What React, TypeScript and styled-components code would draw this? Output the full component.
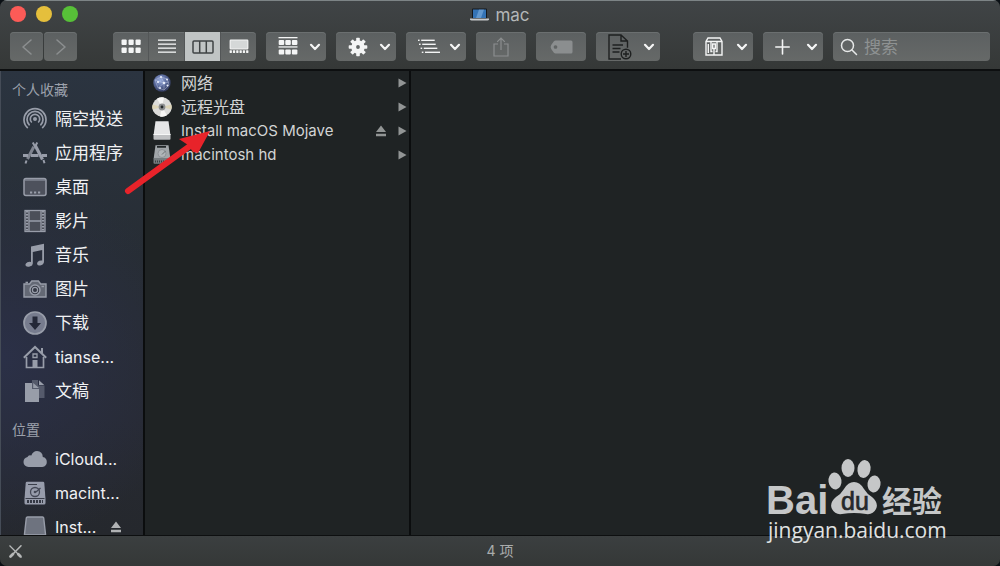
import React from "react";
import styled, { createGlobalStyle, css } from "styled-components";

const GlobalStyle = createGlobalStyle`
  * { box-sizing: border-box; }
  html, body, #root { height: 100%; }
  body {
    margin: 0;
    background: #0a0f14;
    font-family: Inter, "Noto Sans CJK SC", sans-serif;
    color: #dcdddd;
  }
  button, input { font: inherit; color: inherit; }
  svg { display: block; flex: none; }
`;

const Window = styled.main`
  position: relative;
  display: flex;
  flex-direction: column;
  height: 100vh;
  border-radius: 7px;
  overflow: hidden;
  background: #1f2324;
`;

const Header = styled.header`
  flex: none;
  padding: 0 10px 8px;
  border-top: 1px solid #7d8486;
  border-bottom: 2px solid #0d0f10;
  background: linear-gradient(#404446, #353837);
`;

const TitleBar = styled.div`
  position: relative;
  display: flex;
  align-items: center;
  justify-content: center;
  height: 31px;
  padding-bottom: 4px;
`;

const TrafficLights = styled.div`
  position: absolute;
  left: 0;
  top: 5px;
  display: flex;
  gap: 10px;
`;

const Light = styled.button<{ $color: string }>`
  width: 16px;
  height: 16px;
  padding: 0;
  border: 0;
  border-radius: 50%;
  background: ${(p) => p.$color};
`;

const Title = styled.h1`
  display: flex;
  align-items: center;
  gap: 6px;
  margin: 0;
  font-size: 17px;
  font-weight: 400;
  line-height: 24px;
  color: #b4b7b8;
`;

const Toolbar = styled.div`
  display: flex;
  gap: 10px;
`;

const buttonFace = css`
  height: 29px;
  border: 0;
  border-radius: 4px;
  background: linear-gradient(#5c6061, #666968);
  box-shadow: inset 0 1px 0 #6b6f70;
`;

const NavGroup = styled.div`
  display: flex;
  gap: 1px;
  margin-right: 26px;
`;

const ToolButton = styled.button<{ $width: number; $split?: boolean; $dim?: boolean }>`
  ${buttonFace}
  display: flex;
  flex: none;
  align-items: center;
  justify-content: ${(p) => (p.$split ? "space-between" : "center")};
  width: ${(p) => p.$width}px;
  padding: ${(p) => (p.$split ? "0 5px 0 12px" : "0")};
  color: ${(p) => (p.$dim ? "#8b8e8f" : "#f4f5f5")};
`;

const ViewGroup = styled.div`
  ${buttonFace}
  display: flex;
  flex: none;
  width: 143px;
  overflow: hidden;
`;

const ViewButton = styled.button<{ $active?: boolean }>`
  display: flex;
  flex: 1;
  align-items: center;
  justify-content: center;
  padding: 0;
  border: 0;
  background: ${(p) => (p.$active ? "#c0c4c4" : "transparent")};
  color: ${(p) => (p.$active ? "#3f4344" : "#f4f5f5")};
  & + & { border-left: 1px solid #535657; }
`;

const TrailingTools = styled.div`
  display: flex;
  flex: 1;
  gap: 10px;
  min-width: 0;
  margin-left: 23px;
`;

const SearchField = styled.label`
  ${buttonFace}
  display: flex;
  flex: 1;
  align-items: center;
  gap: 6px;
  min-width: 0;
  padding: 0 7px;
  color: #e6e8e8;
`;

const SearchInput = styled.input`
  flex: 1;
  min-width: 0;
  padding: 0;
  border: 0;
  outline: 0;
  background: transparent;
  font-size: 17px;
  line-height: 24px;
  &::placeholder { color: #8e9292; opacity: 1; }
`;

const Content = styled.div`
  display: flex;
  flex: 1;
  min-height: 0;
`;

const Sidebar = styled.nav`
  flex: none;
  width: 143px;
  overflow: hidden;
  padding-top: 7px;
  border-left: 1px solid #454c57;
  background:
    radial-gradient(ellipse 190px 190px at 0 62%, #2b3047, transparent),
    linear-gradient(#2b3440, #272d34 40%, #272a33 75%, #25282d);
`;

const SidebarHeading = styled.h2`
  margin: 0;
  padding-left: 11px;
  font-size: 14px;
  font-weight: 400;
  line-height: 24px;
  color: #9ca1ac;
`;

const SidebarList = styled.ul`
  margin: 0 0 10px;
  padding: 0;
  list-style: none;
`;

const SidebarItem = styled.li`
  display: flex;
  align-items: center;
  height: 34px;
  padding-left: 22px;
`;

const SidebarLink = styled.a<{ $latin?: boolean }>`
  display: flex;
  align-items: center;
  gap: 8px;
  font-size: ${(p) => (p.$latin ? 16 : 17)}px;
  line-height: 24px;
  white-space: nowrap;
  color: #f0f1f3;
  text-decoration: none;
  svg { color: #989da9; }
`;

const EjectButton = styled.button`
  display: flex;
  align-items: center;
  padding: 0;
  border: 0;
  margin-left: 14px;
  background: transparent;
  color: #b0b2b4;
`;

const Column = styled.ul`
  flex: none;
  width: 268px;
  margin: 0;
  padding: 0 2px 0 7px;
  border-left: 2px solid #0b0d0e;
  border-right: 2px solid #0b0d0e;
  list-style: none;
`;

const FileRow = styled.li`
  display: flex;
  align-items: center;
  gap: 11px;
  height: 24px;
  color: #929595;
`;

const FileLink = styled.a<{ $latin?: boolean }>`
  display: flex;
  flex: 1;
  align-items: center;
  gap: 9px;
  font-size: ${(p) => (p.$latin ? 15 : 16)}px;
  line-height: 24px;
  white-space: nowrap;
  color: #d2d4d4;
  text-decoration: none;
`;

const RowEject = styled(EjectButton)`
  margin-left: 0;
  color: #929595;
`;

const Footer = styled.footer`
  display: flex;
  flex: none;
  align-items: center;
  height: 31px;
  padding: 0 8px;
  border-top: 1px solid #0d0f10;
  background: linear-gradient(#3b3f40, #353837);
`;

const FooterButton = styled.button`
  padding: 0;
  border: 0;
  background: transparent;
  color: #b6b8b8;
`;

const Count = styled.p`
  flex: 1;
  margin: 0 15px 0 0;
  font-size: 14px;
  line-height: 20px;
  text-align: center;
  color: #a9acac;
`;

const Pointer = styled.svg`
  position: absolute;
  left: 120px;
  top: 125px;
  pointer-events: none;
`;

const Watermark = styled.div`
  position: absolute;
  right: 54px;
  bottom: 22px;
  width: 178px;
  pointer-events: none;
`;

const BrandMark = styled.svg`
  overflow: visible;
  fill: #c5c7c8;
  font-family: "Liberation Sans", sans-serif;
`;

const BrandUrl = styled.div`
  font-family: "Open Sans", sans-serif;
  font-size: 21px;
  line-height: 28px;
  white-space: nowrap;
  color: #e0e2e2;
`;

const Chevron = () => (
  <svg width="12" height="10" viewBox="0 0 12 10" fill="none" stroke="currentColor" strokeWidth="2.2" strokeLinecap="round" strokeLinejoin="round">
    <path d="M2 2.8 6 7l4-4.2" />
  </svg>
);

const NavArrow = ({ forward = false }: { forward?: boolean }) => (
  <svg width="12" height="18" viewBox="0 0 12 18" fill="none" stroke="currentColor" strokeWidth="1.6" strokeLinecap="round" strokeLinejoin="round">
    <path d={forward ? "M2 2l8 7-8 7" : "M10 2 2 9l8 7"} />
  </svg>
);

const GridIcon = () => (
  <svg width="20" height="15" viewBox="0 0 20 15" fill="currentColor">
    {[0, 7, 14].map((x) => [0.5, 8.5].map((y) => <rect key={`${x}-${y}`} x={x + 0.5} y={y} width="5.2" height="5.6" rx="1" />))}
  </svg>
);

const ListIcon = () => (
  <svg width="20" height="15" viewBox="0 0 20 15" fill="currentColor">
    {[0.5, 4.5, 8.5, 12.5].map((y) => <rect key={y} x="1" y={y} width="18" height="1.3" />)}
  </svg>
);

const ColumnsIcon = () => (
  <svg width="22" height="14" viewBox="0 0 22 14" fill="none" stroke="currentColor" strokeWidth="1.5">
    <rect x="1" y="1" width="20" height="12" rx="1" />
    <path d="M7.7 1v12M14.3 1v12" />
  </svg>
);

const GalleryIcon = () => (
  <svg width="20" height="15" viewBox="0 0 20 15" fill="currentColor">
    <rect x="1.2" y="1.2" width="17.6" height="8.6" rx=".6" fill="#d5d8d8" stroke="currentColor" strokeWidth="1.2" />
    {[0.6, 3.9, 7.2, 10.5, 13.8, 17.1].map((x) => <rect key={x} x={x} y="11.3" width="2.3" height="2.6" rx=".4" />)}
  </svg>
);

const ArrangeIcon = () => (
  <svg width="20" height="19" viewBox="0 0 20 19" fill="currentColor">
    <rect x=".5" y="0" width="19" height="1.3" />
    <rect x=".5" y="9.3" width="19" height="1.3" />
    {[0.7, 7.3, 13.9].map((x) => [3, 12.6].map((y) => <rect key={`${x}-${y}`} x={x} y={y} width="5.5" height="5" rx="1" />))}
  </svg>
);

const GearIcon = () => (
  <svg width="20" height="20" viewBox="-10 -10 20 20" fill="currentColor">
    {[0, 45, 90, 135, 180, 225, 270, 315].map((a) => <rect key={a} x="-1.8" y="-9.3" width="3.6" height="5" rx=".7" transform={`rotate(${a})`} />)}
    <circle r="4.3" fill="none" stroke="currentColor" strokeWidth="4.8" />
  </svg>
);

const OutlineIcon = () => (
  <svg width="22" height="15" viewBox="0 0 22 15" fill="currentColor">
    {[[0, 0.6, 12.5], [1, 4.6, 12.5], [2.6, 8.6, 12.5], [3.8, 12.6, 14]].map(([x, y, w]) => (
      <g key={y}>
        <rect x={x} y={y} width="1.6" height="1.4" />
        <rect x={x + 3.2} y={y} width={w + 1} height="1.4" />
      </g>
    ))}
  </svg>
);

const ShareIcon = () => (
  <svg width="16" height="20" viewBox="0 0 16 20" fill="none" stroke="currentColor" strokeWidth="1.2">
    <path d="M5 7H1v12h14V7h-4M8 13V1M4.2 4.8 8 1l3.8 3.8" />
  </svg>
);

const TagIcon = () => (
  <svg width="23" height="14" viewBox="0 0 23 14">
    <path fill="currentColor" fillRule="evenodd" d="M5.6.5H21q1.5 0 1.5 1.5v10q0 1.5-1.5 1.5H5.6Q4.6 13.500 3.900 12.800L1.200 9Q0 7 1.200 5L3.900 1.200Q4.600.5 5.600.5ZM5.500 5.200a1.800 1.800 0 1 0 .01 0Z" />
  </svg>
);

const NewFileIcon = () => (
  <svg width="24" height="26" viewBox="0 0 24 26" fill="none" stroke="#1e2020" strokeWidth="1.4">
    <path d="M19.500 13.800V7L13 1H1v24h12M13 1v6h6.500M4.500 11h10.500M4.500 14.500h8M4.500 18h7" />
    <circle cx="18" cy="20" r="4.800" />
    <path d="M18 17v6M15 20h6" />
  </svg>
);

const ArchiveIcon = () => (
  <svg width="18" height="19" viewBox="0 0 18 19" fill="none" stroke="currentColor" strokeWidth="1.4">
    <path d="M3 1h12l2 3.500V18H1V4.500ZM1 4.500h16M6 4.500V14.500h1.500M12 4.500V14.500h-1.500M3.300 7v9" />
    <path d="M7.700 7h2.600v4.500H7.700ZM9 11.500V18" />
  </svg>
);

const PlusIcon = () => (
  <svg width="15" height="16" viewBox="0 0 15 16" stroke="currentColor" strokeWidth="1.600" strokeLinecap="round">
    <path d="M7.500 1v14M.8 8h13.400" />
  </svg>
);

const SearchIcon = () => (
  <svg width="18" height="18" viewBox="0 0 18 18" fill="none" stroke="currentColor" strokeWidth="1.500" strokeLinecap="round">
    <circle cx="7.500" cy="7.500" r="6" />
    <path d="m12 12 4.500 4.500" />
  </svg>
);

const LaptopIcon = () => (
  <svg width="19" height="14" viewBox="0 0 19 14">
    <rect x="2" y=".5" width="15" height="10.500" rx="1" fill="#14191d" />
    <path fill="#3473b5" d="M3 1.500h13v8.500H3z" />
    <path fill="#8fbde8" d="m9 1.500-3 8.500h5l3-8.500z" opacity=".5" />
    <path fill="#c5c8ca" d="M0 10.500h19v1.300q-.5.800-1.500.8h-16Q.5 12.600 0 11.800Z" />
  </svg>
);

const EjectIcon = () => (
  <svg width="12" height="12" viewBox="0 0 12 12" fill="currentColor">
    <path d="M6 .5 11 7H1ZM1 8.800h10v2.400H1z" />
  </svg>
);

const Disclosure = () => (
  <svg width="9" height="10" viewBox="0 0 9 10" fill="currentColor">
    <path d="M.5.500 8.500 5 .5 9.500Z" />
  </svg>
);

const SidebarIcon = ({ children }: { children: React.ReactNode }) => (
  <svg width="24" height="24" viewBox="0 0 24 24" fill="none" stroke="currentColor">{children}</svg>
);

const icons = {
  airdrop: (
    <SidebarIcon>
      <circle cx="12" cy="12" r="2" fill="currentColor" stroke="none" />
      <g strokeWidth="1.700">
        <path d="M8.800 15.500a4.700 4.700 0 1 1 6.400 0" />
        <path d="M6.600 18.300a8 8 0 1 1 10.800 0" />
        <path d="M4.800 21a11 11 0 1 1 14.400 0" />
      </g>
    </SidebarIcon>
  ),
  apps: (
    <SidebarIcon>
      <path strokeWidth="3.200" d="m12 4 7.500 14.500" />
      <path strokeWidth="3" stroke="#7f848f" d="M10.800 5.800 4.500 18" />
      <path strokeWidth="2" d="m9.800 1.500 2.200 4 2.300-4M3.500 19.500l-1 3M20.500 19l1 3.300" />
      <path strokeWidth="2.800" d="M0 14.500h5M8 14.500h7.500M19 14.500h5" />
    </SidebarIcon>
  ),
  desktop: (
    <SidebarIcon>
      <rect x="1" y="3.500" width="22" height="17" rx="2" strokeWidth="1.500" fill="#4d515c" />
      <path strokeWidth="1.200" d="M2 5h20" />
      <path strokeWidth="2.200" d="M7 17.500h2.200M11 17.500h2.200M15 17.500h2.200" />
    </SidebarIcon>
  ),
  movies: (
    <SidebarIcon>
      <rect x="2" y="1.500" width="20" height="21" fill="#4b4f59" strokeWidth="1.300" />
      <path strokeWidth="1.300" d="M6 1.500v21M18 1.500v21M6 12h12" />
      <path strokeWidth="2.200" strokeDasharray="1.500 1.500" d="M4 2v20M20 2v20" />
    </SidebarIcon>
  ),
  music: (
    <SidebarIcon>
      <path fill="currentColor" stroke="none" d="M8 3.500 21 .8v17.700q0 2.800-3 3.700t-3.800-1q-.6-2.200 2-3.400 1.400-.6 3-.3V7L9.800 9v11.500q0 2.300-3 3.100t-4.200-1q-.8-2 1.800-3.400Q6 18.500 8 18.900Z" />
    </SidebarIcon>
  ),
  photos: (
    <SidebarIcon>
      <path strokeWidth="1.400" fill="#646975" d="M1 7h5.500l2.300-3h6.600l2.300 3H23v13H1Z" />
      <path strokeWidth="1.600" d="M2.500 5.500h2.500" />
      <circle cx="12" cy="13" r="5" strokeWidth="1.500" fill="#343844" />
      <circle cx="12" cy="13" r="2.600" strokeWidth="1.200" />
      <path strokeWidth="1.400" d="M18.500 9.500h2.500" />
    </SidebarIcon>
  ),
  downloads: (
    <SidebarIcon>
      <circle cx="12" cy="12" r="11" fill="#777c8e" strokeWidth="1.700" />
      <path fill="#242838" stroke="none" d="M9.500 5.500h5V12H18l-6 7-6-7h3.500Z" />
    </SidebarIcon>
  ),
  home: (
    <SidebarIcon>
      <path strokeWidth="2" d="M.8 12.800 12 2l11.200 10.800M19 8V3" />
      <path strokeWidth="1.700" d="M3.500 12v10.500h17V12" />
      <path strokeWidth="1.300" d="M10 9h4v3.500h-4z" />
      <path fill="currentColor" stroke="none" d="M9.500 15h5v8h-5z" />
    </SidebarIcon>
  ),
  documents: (
    <SidebarIcon>
      <path fill="#555a6b" stroke="none" d="M9 1h6v5.500h6.500V19H9Z" />
      <path fill="currentColor" stroke="none" d="M16 1.300 21.200 6H16ZM2 4h7v6h7v13H2ZM10.200 4 16 9h-5.800Z" />
    </SidebarIcon>
  ),
  cloud: (
    <SidebarIcon>
      <path fill="currentColor" stroke="none" d="M5.500 20A5 5 0 0 1 .5 15q0-4 4-5 1-2.400 3.800-1.500Q10 4 14 4q5.600.3 5.800 6 4 .8 4 5t-4.500 5Z" />
    </SidebarIcon>
  ),
  disk: (
    <SidebarIcon>
      <path fill="#979cab" stroke="none" d="M4 .8h16q1.200 0 1.300 1.200L22.500 18v4q0 1.500-1.500 1.500H3q-1.500 0-1.500-1.500v-4L2.700 2Q2.800.8 4 .8Z" />
      <path stroke="#3b3f4b" strokeWidth="1.200" d="M5 3.500h9M2.500 17.500h19" />
      <circle cx="12" cy="11" r="4.500" stroke="#444856" strokeWidth="1.300" />
      <circle cx="12" cy="11" r="1.300" fill="#444856" stroke="none" />
      <path stroke="#444856" strokeWidth="1.400" d="m13 11 4.500-4" />
      <path stroke="#343844" strokeWidth="3" strokeDasharray="2 1" d="M4 20.500h16" />
    </SidebarIcon>
  ),
  drive: (
    <SidebarIcon>
      <path strokeWidth="1.400" fill="#6e737f" d="M4.500 2h15q1 0 1.200 1L22.500 19v5h-21v-5L3.300 3Q3.500 2 4.500 2Z" />
      <path strokeWidth="1.600" d="M2 20h20" />
    </SidebarIcon>
  ),
};

const NetworkIcon = () => (
  <svg width="20" height="20" viewBox="0 0 20 20">
    <defs>
      <radialGradient id="globe" cx=".4" cy=".35" r=".7">
        <stop offset="0" stopColor="#9baede" />
        <stop offset=".5" stopColor="#5b6b9c" />
        <stop offset="1" stopColor="#2e3657" />
      </radialGradient>
    </defs>
    <circle cx="10" cy="10" r="8.700" fill="url(#globe)" />
    <path fill="none" stroke="#d3ddf4" strokeWidth=".5" opacity=".7" d="M3 7 9 4l6 2 2 6-5 5-6-2-3-8 9 3 5-1M9 4l3 6 0 7M6 15l6-5" />
    <g fill="#e7edfa">
      <circle cx="9" cy="4" r="1.100" /><circle cx="12" cy="10" r="1.300" /><circle cx="6" cy="9" r="1.100" /><circle cx="15" cy="6.500" r="1" /><circle cx="8" cy="15" r="1" /><circle cx="15.500" cy="12.500" r="1" />
    </g>
  </svg>
);

const DiscIcon = () => (
  <svg width="20" height="20" viewBox="0 0 20 20">
    <circle cx="10" cy="10" r="9.700" fill="#dcdcda" />
    <path fill="#f6f6f4" d="M10 10 5 1.700A9.700 9.700 0 0 1 12 .5ZM10 10l5 8.300a9.700 9.700 0 0 1-7 1.200Z" />
    <path fill="#ddd5b8" d="M10 10 19.400 7.500a9.700 9.700 0 0 1 0 5ZM10 10 .6 12.500a9.700 9.700 0 0 1 0-5Z" />
    <circle cx="10" cy="10" r="3.400" fill="#8d8f90" />
    <circle cx="10" cy="10" r="1.400" fill="#24282a" />
  </svg>
);

const InstallerIcon = () => (
  <svg width="20" height="20" viewBox="0 0 20 20">
    <path fill="#e5e6e7" d="M3.500.3h13l1.800 13H1.700Z" />
    <path fill="#bfc1c3" d="M1.500 13h17v4.700q0 1-1 1h-15q-1 0-1-1Z" />
    <path fill="#f6f7f7" d="M1.500 13h17v1h-17Z" />
  </svg>
);

const HardDiskIcon = () => (
  <svg width="20" height="20" viewBox="0 0 20 20">
    <path fill="#a1a6a9" d="M3.500.3h13l1.800 13H1.700Z" />
    <path fill="#222729" d="M5 1h9v1.700H5z" />
    <circle cx="10" cy="8.500" r="4" fill="#b0b5b8" stroke="#868c8f" strokeWidth=".8" />
    <path stroke="#6c7275" d="m10 9.500 3.500-3.500" />
    <path fill="#777d80" d="M1.500 13h17v4.700q0 1-1 1h-15q-1 0-1-1Z" />
    <path stroke="#3a4042" strokeWidth="2" strokeDasharray="1 1" d="M3 16.500h14" />
  </svg>
);

const ToolsIcon = () => (
  <svg width="15" height="15" viewBox="0 0 15 15" fill="none" stroke="currentColor">
    <path strokeWidth="1.300" d="m1.500 1.500 12 12" />
    <path strokeWidth="2.800" strokeLinecap="round" d="m10.300 10.300 2 2M2.500 12.500 5 10" />
    <path strokeWidth="1.600" strokeLinecap="round" d="m6 9 7-7.200" />
  </svg>
);

type Place = { icon: React.ReactNode; label: string; latin?: boolean; eject?: boolean };

const favorites: Place[] = [
  { icon: icons.airdrop, label: "隔空投送" },
  { icon: icons.apps, label: "应用程序" },
  { icon: icons.desktop, label: "桌面" },
  { icon: icons.movies, label: "影片" },
  { icon: icons.music, label: "音乐" },
  { icon: icons.photos, label: "图片" },
  { icon: icons.downloads, label: "下载" },
  { icon: icons.home, label: "tianse...", latin: true },
  { icon: icons.documents, label: "文稿" },
];

const locations: Place[] = [
  { icon: icons.cloud, label: "iCloud...", latin: true },
  { icon: icons.disk, label: "macint...", latin: true },
  { icon: icons.drive, label: "Inst...", latin: true, eject: true },
];

const files: Place[] = [
  { icon: <NetworkIcon />, label: "网络" },
  { icon: <DiscIcon />, label: "远程光盘" },
  { icon: <InstallerIcon />, label: "Install macOS Mojave", latin: true, eject: true },
  { icon: <HardDiskIcon />, label: "macintosh hd", latin: true },
];

const PlaceList = ({ items }: { items: Place[] }) => (
  <SidebarList>
    {items.map((item) => (
      <SidebarItem key={item.label}>
        <SidebarLink href="#" $latin={item.latin}>{item.icon}{item.label}</SidebarLink>
        {item.eject && <EjectButton aria-label="推出"><EjectIcon /></EjectButton>}
      </SidebarItem>
    ))}
  </SidebarList>
);

export default function App() {
  return (
    <>
      <GlobalStyle />
      <Window>
        <Header>
          <TitleBar>
            <TrafficLights>
              <Light $color="#fc5b57" aria-label="关闭" />
              <Light $color="#e5bf3c" aria-label="最小化" />
              <Light $color="#57c038" aria-label="缩放" />
            </TrafficLights>
            <Title><LaptopIcon />mac</Title>
          </TitleBar>
          <Toolbar>
            <NavGroup>
              <ToolButton $width={33} $dim aria-label="后退"><NavArrow /></ToolButton>
              <ToolButton $width={33} $dim aria-label="前进"><NavArrow forward /></ToolButton>
            </NavGroup>
            <ViewGroup>
              <ViewButton aria-label="图标"><GridIcon /></ViewButton>
              <ViewButton aria-label="列表"><ListIcon /></ViewButton>
              <ViewButton $active aria-label="分栏"><ColumnsIcon /></ViewButton>
              <ViewButton aria-label="画廊"><GalleryIcon /></ViewButton>
            </ViewGroup>
            <ToolButton $width={60} $split aria-label="排列"><ArrangeIcon /><Chevron /></ToolButton>
            <ToolButton $width={60} $split aria-label="操作"><GearIcon /><Chevron /></ToolButton>
            <ToolButton $width={60} $split aria-label="大纲"><OutlineIcon /><Chevron /></ToolButton>
            <ToolButton $width={50} $dim aria-label="共享"><ShareIcon /></ToolButton>
            <ToolButton $width={50} $dim aria-label="标签"><TagIcon /></ToolButton>
            <ToolButton $width={64} $split aria-label="新建文件"><NewFileIcon /><Chevron /></ToolButton>
            <TrailingTools>
              <ToolButton $width={60} $split aria-label="压缩"><ArchiveIcon /><Chevron /></ToolButton>
              <ToolButton $width={60} $split aria-label="添加"><PlusIcon /><Chevron /></ToolButton>
              <SearchField>
                <SearchIcon />
                <SearchInput type="text" placeholder="搜索" aria-label="搜索" />
              </SearchField>
            </TrailingTools>
          </Toolbar>
        </Header>
        <Content>
          <Sidebar>
            <SidebarHeading>个人收藏</SidebarHeading>
            <PlaceList items={favorites} />
            <SidebarHeading>位置</SidebarHeading>
            <PlaceList items={locations} />
          </Sidebar>
          <Column>
            {files.map((file) => (
              <FileRow key={file.label}>
                <FileLink href="#" $latin={file.latin}>{file.icon}{file.label}</FileLink>
                {file.eject && <RowEject aria-label="推出"><EjectIcon /></RowEject>}
                <Disclosure />
              </FileRow>
            ))}
          </Column>
        </Content>
        <Footer>
          <FooterButton aria-label="工具"><ToolsIcon /></FooterButton>
          <Count>4 项</Count>
        </Footer>
        <Pointer width="96" height="72" viewBox="0 0 96 72">
          <path stroke="#e8232a" strokeWidth="6" strokeLinecap="round" d="M8 66 70 21" />
          <path fill="#e8232a" d="M90 6 59 14 68 20 73 27 78 28Z" />
        </Pointer>
        <Watermark>
          <BrandMark width="178" height="58" viewBox="0 0 178 58">
            <text x="-2" y="56" fontSize="40" fontWeight="700">Bai</text>
            <ellipse cx="67" cy="23" rx="6.500" ry="8.500" transform="rotate(-8 67 23)" />
            <ellipse cx="80" cy="10" rx="6.500" ry="9" />
            <ellipse cx="96" cy="11" rx="6.500" ry="9" transform="rotate(10 96 11)" />
            <ellipse cx="106" cy="26" rx="6.500" ry="8.500" transform="rotate(8 106 26)" />
            <path d="M86 24q6 0 10 7 3 5 8 8 7 6 4 12-3 6-10 5-6-1-12-1t-12 1q-7 1-10-5-3-6 4-12 5-3 8-8 4-7 10-7Z" />
            <text x="87" y="52" fontSize="25" textAnchor="middle" fill="#25292b" stroke="#25292b" strokeWidth=".7">du</text>
            <text x="114" y="54" fontSize="30" fontWeight="700" fontFamily="'Noto Sans CJK SC', sans-serif">经验</text>
          </BrandMark>
          <BrandUrl>jingyan.baidu.com</BrandUrl>
        </Watermark>
      </Window>
    </>
  );
}
